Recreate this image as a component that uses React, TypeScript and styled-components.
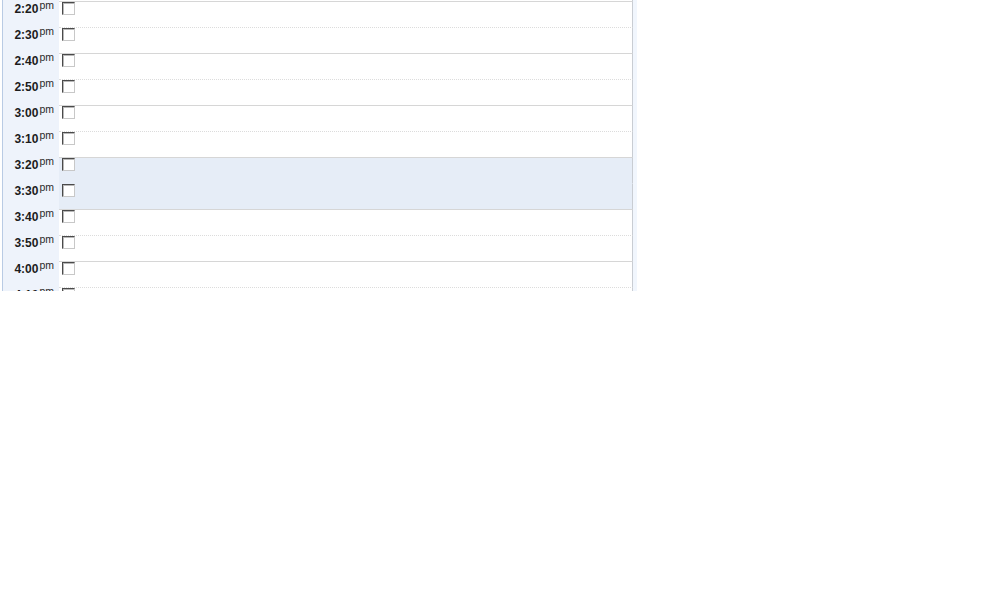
import React, { useLayoutEffect, useRef } from 'react'
import styled, { createGlobalStyle } from 'styled-components'

const GlobalStyle = createGlobalStyle`
  html, body {
    margin: 0;
    padding: 0;
    background: #ffffff;
  }
`

const Viewport = styled.div`
  display: flex;
  width: 635px;
  height: 291px;
  margin-left: 2px;
  overflow: hidden;
  font-family: 'Liberation Sans', Arial, sans-serif;
`

const Rows = styled.div`
  display: flex;
  flex-direction: column;
  width: 631px;
  flex: none;
`

const Row = styled.div`
  display: flex;
  height: 26px;
  flex: none;
`

const TimeCell = styled.div`
  width: 57px;
  box-sizing: border-box;
  border-left: 1px solid #b9cbe4;
  background: #eef3fb;
  display: flex;
  justify-content: flex-end;
  align-items: flex-start;
  padding: 1px 5px 0 0;
  color: #1c1c1c;
`

const Hour = styled.span`
  font-size: 12px;
  font-weight: bold;
  line-height: 14px;
`

const Meridiem = styled.span`
  font-size: 10.5px;
  line-height: 10px;
  color: #2a2a2a;
  margin-left: 1px;
  margin-top: -2px;
`

const SlotCell = styled.div<{ $solid: boolean; $busy: boolean }>`
  flex: 1;
  box-sizing: border-box;
  border-top: 1px ${(p) => (p.$solid ? 'solid #d6d6d6' : p.$busy ? 'solid #e6edf7' : 'dotted #dcdcdc')};
  border-right: 1px solid #c9cdd3;
  background: ${(p) => (p.$busy ? '#e6edf7' : '#ffffff')};
  padding: 0 0 0 3px;
`

const Check = styled.input`
  appearance: none;
  -webkit-appearance: none;
  display: block;
  width: 13px;
  height: 13px;
  margin: 0;
  box-sizing: border-box;
  background: #ffffff;
  border-style: solid;
  border-width: 1px;
  border-color: #4a4a4a #c8c8c8 #c8c8c8 #4a4a4a;
  box-shadow: inset 1px 1px 0 #b8b8b8;
`

const Edge = styled.div`
  width: 4px;
  flex: none;
  background: #f1f6fd;
  height: 372px;
`

const slots = [
  '2:10', '2:20', '2:30', '2:40', '2:50', '3:00', '3:10',
  '3:20', '3:30', '3:40', '3:50', '4:00', '4:10', '4:20',
]

const busy = new Set(['3:20', '3:30'])

const DayView = (): JSX.Element => {
  const ref = useRef<HTMLDivElement>(null)

  // keep 2:20 at the top, like the scrolled calendar
  useLayoutEffect(() => {
    if (ref.current) ref.current.scrollTop = 25
  }, [])

  return (
    <Viewport ref={ref}>
      <Rows>
        {slots.map((t) => {
          const minutes = t.split(':')[1]
          const solid = minutes === '00' || minutes === '20' || minutes === '40'
          return (
            <Row key={t}>
              <TimeCell>
                <Hour>{t}</Hour>
                <Meridiem>pm</Meridiem>
              </TimeCell>
              <SlotCell $solid={solid} $busy={busy.has(t)}>
                <Check type="checkbox" aria-label={t + ' pm'} />
              </SlotCell>
            </Row>
          )
        })}
      </Rows>
      <Edge />
    </Viewport>
  )
}

export default function App(): JSX.Element {
  return (
    <>
      <GlobalStyle />
      <DayView />
    </>
  )
}
